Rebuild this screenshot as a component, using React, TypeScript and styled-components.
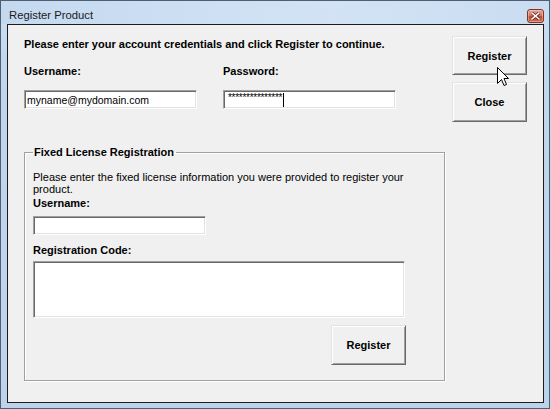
import styled, { createGlobalStyle } from 'styled-components';

const GlobalStyle = createGlobalStyle`
    html, body {
        margin: 0;
        padding: 0;
        background: #cfd6de;
    }
    body {
        font-family: "Liberation Sans", Arial, sans-serif;
        font-size: 11px;
        color: #000;
    }
`;

const Window = styled.div`
    position: relative;
    box-sizing: border-box;
    width: 550px;
    height: 409px;
    border: 1px solid #4f5f72;
    padding: 0 5px 5px 6px;
    background: linear-gradient(to bottom, #cfe0f3 0px, #c2d7ee 60px, #bdd3eb 100%);
    display: flex;
    flex-direction: column;
`;

const TitleBar = styled.div`
    height: 23px;
    margin: 0 -5px 0 -6px;
    padding: 0 5px 0 8px;
    display: flex;
    align-items: flex-start;
    justify-content: space-between;
    background: linear-gradient(to right, #c4d9f0, #d3e3f5 60%, #c9dcf1);
`;

const Title = styled.div`
    margin-top: 7px;
    font-size: 11.3px;
    line-height: 14px;
    color: #1b1b1b;
`;

const CloseButton = styled.div`
    box-sizing: border-box;
    margin-top: 8px;
    width: 17px;
    height: 14px;
    border: 1px solid #7e3326;
    border-radius: 3px;
    background: linear-gradient(to bottom, #e7a593 0%, #d77461 45%, #c2492f 55%, #cf6a4f 100%);
    box-shadow: inset 0 0 0 1px rgba(255, 220, 210, 0.45);
    display: flex;
    align-items: center;
    justify-content: center;
`;

const Client = styled.div`
    box-sizing: border-box;
    flex: 1;
    border: 1px solid #1c1c1c;
    background: #f0f0f0;
    padding: 11px 16px 0 16px;
    display: flex;
`;

const Main = styled.div`
    width: 428px;
    display: flex;
    flex-direction: column;
`;

const Heading = styled.div`
    margin-top: 2px;
    font-weight: bold;
    line-height: 13px;
`;

const CredentialsRow = styled.div`
    margin-top: 14px;
    display: flex;
    gap: 26px;
`;

const FieldColumn = styled.div`
    display: flex;
    flex-direction: column;
`;

const Label = styled.div<{ $gap?: number; $top?: number }>`
    font-weight: bold;
    line-height: 13px;
    margin-top: ${p => p.$top ?? 0}px;
    margin-bottom: ${p => p.$gap ?? 12}px;
`;

const sunken = `
    box-sizing: border-box;
    border-style: solid;
    border-width: 1px;
    border-color: #a0a0a0 #ffffff #ffffff #a0a0a0;
    box-shadow: inset 1px 1px 0 #696969, inset -1px -1px 0 #e3e3e3;
    background: #fff;
`;

const TextInput = styled.input<{ $width?: number }>`
    ${sunken}
    width: ${p => p.$width ?? 173}px;
    height: 19px;
    margin: 0;
    padding: 1px 2px 0 2px;
    font-family: "Liberation Sans", Arial, sans-serif;
    font-size: 10.5px;
    color: #000;
    outline: none;
`;

const PasswordBox = styled.div`
    ${sunken}
    width: 173px;
    height: 19px;
    padding: 2px 0 0 4px;
    display: flex;
    align-items: flex-start;
`;

const Stars = styled.span`
    font-size: 10px;
    line-height: 10px;
    letter-spacing: -0.28px;
    color: #000;
`;

const Caret = styled.span`
    width: 1px;
    height: 14px;
    margin-left: 1px;
    background: #000;
`;

const GroupBox = styled.fieldset`
    box-sizing: border-box;
    width: 421px;
    margin: 37px 0 0 0;
    padding: 12px 38px 15px 8px;
    border: 1px solid #a0a0a0;
    box-shadow: inset 1px 1px 0 #fff, 1px 1px 0 #fff;
    display: flex;
    flex-direction: column;
    min-width: 0;
`;

const Legend = styled.legend`
    margin-left: 0;
    padding: 0 2px 0 1px;
    font-weight: bold;
    line-height: 13px;
`;

const Description = styled.div`
    line-height: 12px;
    margin-bottom: 2px;
`;

const CodeArea = styled.textarea`
    ${sunken}
    width: 372px;
    height: 57px;
    margin: 0;
    padding: 2px;
    resize: none;
    font-family: "Liberation Sans", Arial, sans-serif;
    font-size: 11px;
    outline: none;
`;

const Button = styled.button<{ $height?: number }>`
    box-sizing: border-box;
    width: 75px;
    height: ${p => p.$height ?? 39}px;
    margin: 0;
    padding: 0;
    border: 1px solid;
    border-color: #e3e3e3 #696969 #696969 #e3e3e3;
    box-shadow: inset 1px 1px 0 #ffffff, inset -1px -1px 0 #a0a0a0;
    background: #f0f0f0;
    font-family: "Liberation Sans", Arial, sans-serif;
    font-size: 11px;
    font-weight: bold;
    color: #000;
`;

const GroupFooter = styled.div`
    margin-top: 7px;
    width: 373px;
    display: flex;
    justify-content: flex-end;
`;

const SideButtons = styled.div`
    width: 75px;
    display: flex;
    flex-direction: column;
    gap: 7px;
`;

const Pointer = styled.svg`
    position: absolute;
    left: 496px;
    top: 66px;
`;

export default function App() {
    return (
        <>
            <GlobalStyle />
            <Window>
                <TitleBar>
                    <Title>Register Product</Title>
                    <CloseButton>
                        <svg width="9" height="8" viewBox="0 0 9 8">
                            <path d="M1 1 L8 7 M8 1 L1 7" stroke="#5a1d14" strokeWidth="3" strokeLinecap="square" />
                            <path d="M1 1 L8 7 M8 1 L1 7" stroke="#ffffff" strokeWidth="1.6" strokeLinecap="square" />
                        </svg>
                    </CloseButton>
                </TitleBar>
                <Client>
                    <Main>
                        <Heading>Please enter your account credentials and click Register to continue.</Heading>
                        <CredentialsRow>
                            <FieldColumn>
                                <Label>Username:</Label>
                                <TextInput defaultValue="myname@mydomain.com" />
                            </FieldColumn>
                            <FieldColumn>
                                <Label>Password:</Label>
                                <PasswordBox>
                                    <Stars>{'***************'}</Stars>
                                    <Caret />
                                </PasswordBox>
                            </FieldColumn>
                        </CredentialsRow>
                        <GroupBox>
                            <Legend>Fixed License Registration</Legend>
                            <Description>
                                Please enter the fixed license information you were provided to register your product.
                            </Description>
                            <Label $gap={6}>Username:</Label>
                            <TextInput />
                            <Label $gap={4} $top={9}>Registration Code:</Label>
                            <CodeArea />
                            <GroupFooter>
                                <Button $height={40}>Register</Button>
                            </GroupFooter>
                        </GroupBox>
                    </Main>
                    <SideButtons>
                        <Button>Register</Button>
                        <Button $height={40}>Close</Button>
                    </SideButtons>
                </Client>
                <Pointer width="12" height="20" viewBox="0 0 12 20">
                    <path d="M0.5 0.5 L0.5 16.5 L4.5 12.5 L7 18.5 L9.5 17.5 L7 11.5 L11.5 11.5 Z" fill="#fff" stroke="#000" strokeWidth="1" strokeLinejoin="miter" />
                </Pointer>
            </Window>
        </>
    );
}
